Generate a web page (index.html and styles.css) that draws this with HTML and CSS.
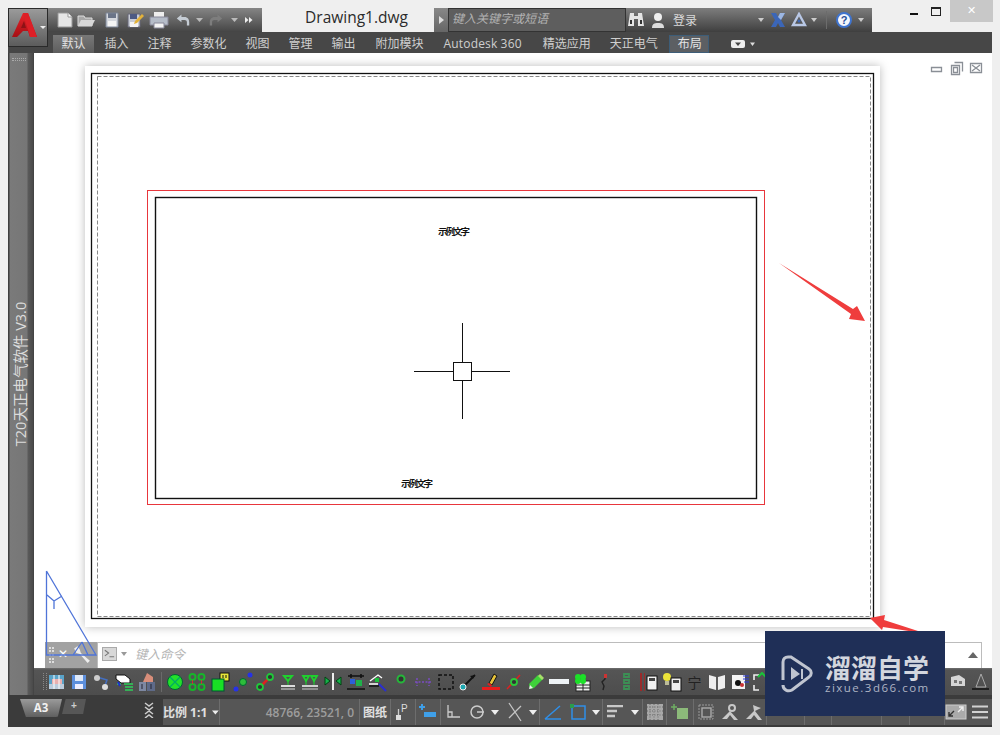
FILE: index.html
```
<!DOCTYPE html>
<html lang="zh">
<head>
<meta charset="utf-8">
<title>Drawing1.dwg</title>
<link rel="stylesheet" href="styles.css">
</head>
<body>
<div class="window">
  <div class="app-btn">
    <svg width="40" height="39" viewBox="0 0 40 39"><defs><linearGradient id="ra" x1="0" y1="0" x2="0" y2="1"><stop offset="0" stop-color="#e8252b"/><stop offset="1" stop-color="#a50f14"/></linearGradient></defs><path d="M15 5h5l9 24h-7l-2-6h-5l-6 6H4Z" fill="url(#ra)"/><path d="M16 13l-3 7h5z" fill="#8e1216"/><path d="M15 5h5l9 24h-7L17 12Z" fill="#dd1f26"/><path d="M32 18h6l-3 3z" fill="#eee"/></svg>
  </div>
  <div class="win-controls">
    <span class="win-min"></span><span class="win-max"></span><span class="win-close">✕</span>
  </div>

  <header class="title-row">
    <div class="qat">
      <svg class="qi" width="20" height="18" viewBox="0 0 20 18"><path d="M3 2h10l4 4v10H3z" fill="#e6e6e6" stroke="#999"/><path d="M13 2v4h4" fill="#fff" stroke="#999"/></svg>
      <svg class="qi q-open" width="20" height="18" viewBox="0 0 20 18"><path d="M2 5h6l1 2h7v8H2z" fill="#a8a8a8" stroke="#ddd"/><path d="M2 15l3-6h14l-3 6z" fill="#d8d8d8"/></svg>
      <svg class="qi q-save" width="20" height="18" viewBox="0 0 20 18"><path d="M4 2h12v14H4z" fill="#d5d8de"/><path d="M6 2h8v5H6z" fill="#6a7488"/><path d="M6 10h8v6H6z" fill="#f4f4f4"/><path d="M4 2h12v14H4z" fill="none" stroke="#7c8698"/></svg>
      <svg class="qi" width="20" height="18" viewBox="0 0 20 18"><path d="M3 3h12v13H3z" fill="#c8ccd6" stroke="#667"/><path d="M5 3h7v5H5z" fill="#4d5a84"/><path d="M5 11h8v5H5z" fill="#f4f4f4"/><path d="M10 10l7-7 2 2-7 7-3 1z" fill="#e3b23a"/></svg>
      <svg class="qi" width="22" height="18" viewBox="0 0 22 18"><path d="M6 1h10v5H6z" fill="#eee"/><path d="M2 6h18v8H2z" fill="#b5bcc8" stroke="#889"/><path d="M6 12h10v5H6z" fill="#f4f4f4" stroke="#889"/></svg>
      <svg class="qi q-undo" width="18" height="14" viewBox="0 0 18 18"><path d="M1 7l6-5v3h4c4 0 6 3 6 7v4h-3v-4c0-2-1-3-3-3H7v3z" fill="#c5ccd4"/></svg>
      <svg class="qa" width="7" height="4" viewBox="0 0 7 4"><path d="M0 0h7L3.500 4z" fill="#bbb"/></svg>
      <svg class="qi" width="18" height="14" viewBox="0 0 18 18"><path d="M17 7l-6-5v3H7c-4 0-6 3-6 7v4h3v-4c0-2 1-3 3-3h4v3z" fill="#7d7d7d"/></svg>
      <svg class="qa q-a2" width="7" height="4" viewBox="0 0 7 4"><path d="M0 0h7L3.500 4z" fill="#bbb"/></svg>
      <svg class="qi q-more" width="8" height="8" viewBox="0 0 8 8"><path d="M0 1l3.500 3L0 7zM4 1l3.500 3L4 7z" fill="#eee"/></svg>
    </div>
    <div class="doc-title">Drawing1.dwg</div>
    <div class="help-bar">
      <span class="search-arrow"><svg width="5" height="8" viewBox="0 0 5 8"><path d="M0 0l5 4-5 4z" fill="#ddd"/></svg></span>
      <span class="search-box">键入关键字或短语</span>
      <svg class="binoc" width="18" height="16" viewBox="0 0 18 16"><path d="M3 1h4v3h4V1h4l2 13h-6V7H7v7H1z" fill="#e4e4e4"/><path d="M3 8h2v4H3zM13 8h2v4h-2z" fill="#333"/></svg>
      <svg class="user" width="14" height="17" viewBox="0 0 14 17"><circle cx="7" cy="5" r="4" fill="#eee"/><path d="M1 16c0-4 2-5 6-5s6 1 6 5z" fill="#ddd"/></svg>
      <span class="login">登录</span>
      <svg class="hb-arrow" width="6" height="4" viewBox="0 0 6 4"><path d="M0 0h6L3 4z" fill="#ccc"/></svg>
      <svg class="x-logo" width="16" height="16" viewBox="0 0 16 16"><path d="M1 1h5l2 4 2-4h5l-4 7 4 7h-5l-2-4-2 4H1l4-7z" fill="#3b66b8"/><path d="M8 5l2-4h5l-4 7z" fill="#9db7e2"/></svg>
      <svg class="a-logo" width="16" height="16" viewBox="0 0 16 16"><path d="M8 2l6 11H2z" fill="none" stroke="#b9c8e6" stroke-width="2.400"/><circle cx="8" cy="9" r="1.500" fill="#3c66b4"/></svg>
      <svg class="hb-arrow2" width="6" height="4" viewBox="0 0 6 4"><path d="M0 0h6L3 4z" fill="#ccc"/></svg>
      <span class="hb-sep"></span>
      <span class="help-q">?</span>
      <svg class="hb-arrow3" width="6" height="4" viewBox="0 0 6 4"><path d="M0 0h6L3 4z" fill="#ccc"/></svg>
    </div>
  </header>

  <nav class="tabs">
    <span class="tab tab-on">默认</span>
    <span class="tab">插入</span>
    <span class="tab">注释</span>
    <span class="tab">参数化</span>
    <span class="tab">视图</span>
    <span class="tab">管理</span>
    <span class="tab">输出</span>
    <span class="tab tab-addon">附加模块</span>
    <span class="tab tab-latin">Autodesk 360</span>
    <span class="tab">精选应用</span>
    <span class="tab">天正电气</span>
    <span class="tab tab-ctx">布局</span>
    <span class="tab tab-icon"><svg width="26" height="10" viewBox="0 0 26 10"><rect x="1" y="1" width="14" height="8" rx="2" fill="#eee"/><path d="M5 3.500h6L8 7z" fill="#444"/><path d="M20 3.500h5L22.500 7z" fill="#ddd"/></svg></span>
  </nav>

  <div class="work">
    <aside class="rail">
      <span class="rail-grip"></span>
      <span class="rail-label">T20天正电气软件 V3.0</span>
    </aside>
    <div class="work-col">
      <div class="stage">
        <div class="canvas"></div>
        <div class="cmd-row">
          <div class="cmd-grip">
            <span class="cmd-dots"></span>
            <span class="cmd-x">✕</span>
            <svg width="18" height="18" viewBox="0 0 16 16"><path d="M1 3l3-2 2 3 1 3 8 7-2 2-7-8-3-1z" fill="#eee"/></svg>
          </div>
          <div class="cmd-input">
            <span class="cmd-prompt"><svg width="14" height="12" viewBox="0 0 14 12"><path d="M2 2l4 3-4 3M7 9h5" fill="none" stroke="#777" stroke-width="1.200"/></svg></span>
            <svg class="cmd-caret" width="6" height="4" viewBox="0 0 6 4"><path d="M0 0h6L3 4z" fill="#999"/></svg>
            <span class="cmd-text">键入命令</span>
            <svg class="cmd-up" width="10" height="6" viewBox="0 0 10 6"><path d="M0 6h10L5 0z" fill="#666"/></svg>
          </div>
        </div>
        <svg class="drawing" width="958" height="615" viewBox="34 53 958 615">
          <rect class="paper" x="85" y="66" width="795" height="561"/>
          <rect class="frame" x="91.500" y="73.500" width="782" height="545"/>
          <rect class="dash" x="97.500" y="76.500" width="773" height="540"/>
          <rect class="red-box" x="147.500" y="190.500" width="617" height="314"/>
          <rect class="black-box" x="155.500" y="197.500" width="601" height="301"/>
          <text class="sample" x="453" y="235">示例文字</text>
          <text class="sample" x="416" y="487">示例文字</text>
          <path class="thin" d="M414 371.500h39M471 371.500h39M462.500 323v39M462.500 380v39"/>
          <rect class="thin-box" x="453.500" y="362.500" width="18" height="18"/>
          <path class="ucs" d="M46.500 571V655H96L46.500 571M47 595l7 6 8-5M54 601v8M73 655l9-13M82 642l6 13"/>
          <path class="red-arrow" d="M779 263L853 309l4-3 8 15-16-2 2-5z"/>
          <path class="red-arrow" d="M870 618l15-3-1 5 34 11-3 1-32-5-1 3z"/>
          <g class="mdi">
            <path d="M931.500 67.500h10v4h-10z"/>
            <path d="M951.500 65.500h8v9h-8z"/><path d="M954.500 62.500h8v9"/><path d="M953.500 67.500h4v5h-4z"/>
            <path d="M970.500 63.500h11v9h-11z"/><path d="M972 65l8 6M980 65l-8 6"/>
          </g>
        </svg>
      </div>
      <div class="toolbar">
        <span class="tb-grip"></span>
        <span class="slot"><svg width="20" height="20" viewBox="0 0 20 20"><rect x="2" y="3" width="15" height="14" fill="#5aa3c9"/><path d="M5 7h10v5H5z" fill="#e8b0b0"/><path d="M2 12h15v5H2z" fill="#bcd"/><path d="M7 3v14M12 3v14" stroke="#fff"/></svg></span>
        <span class="slot"><svg width="20" height="20" viewBox="0 0 20 20"><rect x="3" y="3" width="14" height="14" fill="#5d8fdc"/><rect x="6" y="3" width="8" height="6" fill="#dfe9f8"/><rect x="6" y="12" width="8" height="5" fill="#eef"/></svg></span>
        <span class="slot"><svg width="20" height="20" viewBox="0 0 20 20"><path d="M5 5l10 3-3 8" fill="none" stroke="#446fc0" stroke-width="1.500"/><circle cx="5" cy="6" r="3" fill="#ccc"/><circle cx="13" cy="15" r="3" fill="#ddd"/></svg></span>
        <span class="slot"><svg width="20" height="20" viewBox="0 0 20 20"><path d="M1 3h9l5 4v4H6L1 7z" fill="#fff" stroke="#111"/><path d="M2 12h4M9 12h9M10 15h8M10 18h8" stroke="#2ecf5a" stroke-width="1.600"/><path d="M3 10l2 4" stroke="#1c2fd0" stroke-width="2"/></svg></span>
        <span class="slot"><svg width="20" height="20" viewBox="0 0 20 20"><path d="M10 1l6 4v5H6z" fill="#d88e7a"/><rect x="2" y="10" width="7" height="9" fill="#7d88a2"/><rect x="10" y="10" width="8" height="9" fill="#5e6a88"/><path d="M5 12v5M14 12v5" stroke="#223"/></svg></span>
        <span class="tb-sep"></span>
        <span class="slot"><svg width="20" height="20" viewBox="0 0 20 20"><circle cx="10" cy="10" r="7.500" fill="#23e02a" stroke="#063" stroke-width="1"/><path d="M5 5l10 10M15 5L5 15" stroke="#0a6" stroke-width="1.200"/></svg></span>
        <span class="slot"><svg width="20" height="20" viewBox="0 0 20 20"><g fill="none" stroke="#17b52a" stroke-width="2"><circle cx="5.500" cy="5" r="3"/><circle cx="14.500" cy="5" r="3"/><circle cx="5.500" cy="15" r="3"/><circle cx="14.500" cy="15" r="3"/></g><path d="M5.500 8v4M14.500 8v4" stroke="#c33"/></svg></span>
        <span class="slot"><svg width="20" height="20" viewBox="0 0 20 20"><rect x="10" y="1" width="9" height="8" fill="#e6e63a" stroke="#111"/><path d="M13 3v3M16 3v3" stroke="#111"/><rect x="2" y="7" width="12" height="12" fill="#19e025" stroke="#053"/></svg></span>
        <span class="slot"><svg width="20" height="20" viewBox="0 0 20 20"><circle cx="17" cy="3" r="2.500" fill="#2632e8"/><circle cx="3" cy="17" r="2.500" fill="#2632e8"/><circle cx="10" cy="10" r="3.500" fill="#2dbd3a" stroke="#063"/></svg></span>
        <span class="slot"><svg width="20" height="20" viewBox="0 0 20 20"><path d="M6 14L14 6" stroke="#e02020" stroke-width="2.500"/><circle cx="15" cy="5" r="3" fill="#333" stroke="#1fc83a" stroke-width="1.800"/><circle cx="5" cy="15" r="3" fill="#333" stroke="#1fc83a" stroke-width="1.800"/></svg></span>
        <span class="slot"><svg width="20" height="20" viewBox="0 0 20 20"><path d="M6 4h8l-4 5z" fill="none" stroke="#1fd12e" stroke-width="2"/><path d="M10 9v4" stroke="#1fd12e"/><path d="M3 14h14" stroke="#fff" stroke-width="1.600"/><path d="M3 17h14" stroke="#ddd"/></svg></span>
        <span class="slot"><svg width="20" height="20" viewBox="0 0 20 20"><path d="M3 4h6l-3 5zM11 4h6l-3 5z" fill="none" stroke="#1fd12e" stroke-width="1.800"/><path d="M6 9v4M14 9v4" stroke="#1fd12e"/><path d="M2 14h16" stroke="#eee" stroke-width="1.600"/><path d="M2 17h16" stroke="#ccc"/></svg></span>
        <span class="slot"><svg width="20" height="20" viewBox="0 0 20 20"><path d="M2 5l5 4-5 4zM18 5l-5 4 5 4z" fill="#16b04a" stroke="#041"/><path d="M10 1v17" stroke="#eee" stroke-width="2"/></svg></span>
        <span class="slot"><svg width="20" height="20" viewBox="0 0 20 20"><path d="M2 4h16M5 2v4M15 2v4M1 17h18" stroke="#111" stroke-width="1.600"/><rect x="4" y="7" width="5" height="5" fill="#2c5fd8"/><rect x="10" y="8" width="6" height="6" fill="#1fb04a"/></svg></span>
        <span class="slot"><svg width="20" height="20" viewBox="0 0 20 20"><path d="M2 9l8-6 4 3M1 12h9" stroke="#fff" stroke-width="1.400" fill="none"/><path d="M7 6h4v4H7z" fill="#19c03a"/><path d="M1 14h10" stroke="#111" stroke-width="1.500"/><path d="M11 12l7 7" stroke="#2a2ecf" stroke-width="2"/></svg></span>
        <span class="slot"><svg width="20" height="20" viewBox="0 0 20 20"><circle cx="10" cy="7" r="3.500" fill="#333" stroke="#25b83a" stroke-width="2"/></svg></span>
        <span class="slot"><svg width="20" height="20" viewBox="0 0 20 20"><path d="M4 6v8M16 6v8M2 10h16" stroke="#7a4cc0" stroke-width="1.500" stroke-dasharray="2 1.500" fill="none"/></svg></span>
        <span class="slot"><svg width="20" height="20" viewBox="0 0 20 20"><rect x="3" y="3" width="14" height="14" fill="none" stroke="#111" stroke-width="1.500" stroke-dasharray="3 2"/></svg></span>
        <span class="slot"><svg width="20" height="20" viewBox="0 0 20 20"><path d="M6 14L17 3" stroke="#111" stroke-width="1.800"/><path d="M17 3l-5 1 3 3z" fill="#111"/><circle cx="5" cy="15" r="3" fill="#1ca7b0" stroke="#eee"/></svg></span>
        <span class="slot"><svg width="20" height="20" viewBox="0 0 20 20"><path d="M8 11L13 2l3 2-5 9z" fill="#e6c23a" stroke="#111"/><path d="M1 15h18v3H1z" fill="#e81d1d"/><path d="M6 12l2-1 3 2-1 2z" fill="#e81d1d"/></svg></span>
        <span class="slot"><svg width="20" height="20" viewBox="0 0 20 20"><path d="M3 17L16 3" stroke="#e02020" stroke-width="1.500"/><circle cx="10" cy="10" r="3" fill="#333" stroke="#2cc83a" stroke-width="1.800"/></svg></span>
        <span class="slot"><svg width="20" height="20" viewBox="0 0 20 20"><path d="M3 12L12 3l5 4-9 9-4 1z" fill="#3fd13a"/><path d="M14 2l4 4-2 2-4-4z" fill="#a6e06a"/><path d="M3 17l4-1-3-3z" fill="#eee"/></svg></span>
        <span class="slot"><svg width="20" height="20" viewBox="0 0 20 20"><rect x="0" y="7" width="20" height="5" fill="#eef3f6"/></svg></span>
        <span class="slot"><svg width="20" height="20" viewBox="0 0 20 20"><rect x="5" y="9" width="14" height="10" fill="#eee" stroke="#222"/><path d="M5 13h14M5 16h14M12 9v10" stroke="#222"/><circle cx="7" cy="5" r="3" fill="#1ce028"/><circle cx="12" cy="5" r="3" fill="#1ce028"/><circle cx="7" cy="9" r="3" fill="#1ce028"/><circle cx="12" cy="9" r="3" fill="#1ce028"/></svg></span>
        <span class="slot"><svg width="20" height="20" viewBox="0 0 20 20"><path d="M11 2v5l-3 3 2 4-1 4" fill="none" stroke="#222" stroke-width="1.400"/><path d="M10 2h3v4h-3z" fill="#c33"/></svg></span>
        <span class="slot"><svg width="20" height="20" viewBox="0 0 20 20"><g fill="none" stroke="#3c8f55" stroke-width="1.800"><path d="M7 2h5v3H7zM7 8h5v3H7zM7 14h5v3H7z"/></g></svg></span>
        <span class="slot"><svg width="20" height="20" viewBox="0 0 20 20"><path d="M1 1h2v18H1zM5 1h1v18H5z" fill="#9a2a2a"/><rect x="8" y="4" width="10" height="14" fill="#f0f0f0" stroke="#111"/><rect x="10" y="6" width="6" height="3" fill="#444"/></svg></span>
        <span class="slot"><svg width="20" height="20" viewBox="0 0 20 20"><circle cx="5" cy="5" r="4" fill="#eae23a"/><rect x="3" y="9" width="4" height="4" fill="#bb9"/><rect x="9" y="6" width="10" height="13" fill="#eee" stroke="#111"/><rect x="11" y="8" width="6" height="3" fill="#444"/></svg></span>
        <span class="slot tool-char">宁</span>
        <span class="slot"><svg width="20" height="20" viewBox="0 0 20 20"><path d="M2 3l7 2v13l-7-2zM18 3l-7 2v13l7-2z" fill="#eee"/><path d="M10 5v13" stroke="#666"/></svg></span>
        <span class="slot"><svg width="20" height="20" viewBox="0 0 20 20"><path d="M2 3h13v14H2z" fill="#f3f3f3"/><circle cx="8" cy="11" r="3" fill="#111"/><circle cx="12" cy="13" r="2" fill="#c33"/><path d="M13 4h6M13 7h6M14 10h5" stroke="#2a3ae0"/></svg></span>
        <span class="slot"><svg width="20" height="20" viewBox="0 0 20 20"><path d="M2 8V3h5M13 3h5v5M18 13v5h-5M7 18H2v-5" fill="none" stroke="#eee" stroke-width="1.600"/><path d="M6 5l4-4 4 4" fill="none" stroke="#19c43a" stroke-width="2"/></svg></span>
        <span class="tb-right">
          <span class="slot"><svg width="20" height="20" viewBox="0 0 20 20"><circle cx="6" cy="10" r="5" fill="none" stroke="#ddd" stroke-width="1.500"/></svg></span>
          <span class="slot"><svg width="20" height="20" viewBox="0 0 20 20"><path d="M3 5l8-2 6 4v7H3z" fill="#d6d6d6"/><path d="M6 8h3v3H6zM11 9h3v3h-3z" fill="#777"/></svg></span>
          <span class="slot"><svg width="20" height="20" viewBox="0 0 20 20"><path d="M10 2l5 13H5z" fill="none" stroke="#aaa"/><path d="M1 17h17" stroke="#111" stroke-width="1.500"/></svg></span>
        </span>
      </div>
    </div>
  </div>

  <footer class="status">
    <div class="layouts">
      <span class="lay-a3">A3</span>
      <span class="lay-plus">+</span>
      <span class="lay-chev"><svg width="10" height="16" viewBox="0 0 10 16"><path d="M1 1l4 3 4-3M1 5l4 3 4-3M1 12l4-3 4 3M1 16l4-3 4 3" fill="none" stroke="#ccc" stroke-width="1.500"/></svg></span>
    </div>
    <div class="sb-wrap">
      <span class="sb sb-scale">比例 1:1<svg width="8" height="5" viewBox="0 0 8 5"><path d="M0 0h8L4 5z" fill="#eee"/></svg></span>
      <span class="sb sb-coord">48766, 23521, 0</span>
      <span class="sb sb-paper">图纸</span>
      <span class="sb i25"><svg width="16" height="18" viewBox="0 0 16 18"><rect x="1" y="12" width="5" height="5" fill="#ddd"/><path d="M3.500 12V6" stroke="#ccc" stroke-width="1.300"/><text class="p-mark" x="6" y="9">P</text></svg></span>
      <span class="sb i25"><svg width="20" height="18" viewBox="0 0 20 18"><path d="M4 1v6M1 4h6" stroke="#3f9fe8" stroke-width="2"/><rect x="6" y="9" width="12" height="5" fill="#3f9fe8"/></svg></span>
      <span class="sb sb-group">
        <span class="ic24"><svg width="16" height="16" viewBox="0 0 16 16"><path d="M3 1v12h12M3 8h4v5" fill="none" stroke="#ccc" stroke-width="1.300"/></svg></span>
        <span class="ic24"><svg width="16" height="16" viewBox="0 0 16 16"><circle cx="8" cy="8" r="6" fill="none" stroke="#ccc" stroke-width="1.500"/><path d="M8 8h7" stroke="#ccc" stroke-width="1.500"/></svg></span>
        <span class="ar12"><svg width="8" height="5" viewBox="0 0 8 5"><path d="M0 0h8L4 5z" fill="#eee"/></svg></span>
        <span class="ic24 ml2"><svg width="18" height="20" viewBox="0 0 18 20"><path d="M3 1l12 18M15 4L3 16" fill="none" stroke="#c4c4c4" stroke-width="1.300"/></svg></span>
        <span class="ar12"><svg width="8" height="5" viewBox="0 0 8 5"><path d="M0 0h8L4 5z" fill="#eee"/></svg></span>
      </span>
      <span class="sb sb-group">
        <span class="ic25"><svg width="18" height="16" viewBox="0 0 18 16"><path d="M1 15h16M1 15L16 2" fill="none" stroke="#2f8fe8" stroke-width="1.500"/></svg></span>
        <span class="ic25"><svg width="18" height="18" viewBox="0 0 18 18"><rect x="3" y="3" width="13" height="13" fill="none" stroke="#2f8fe8" stroke-width="1.500"/><rect x="1" y="1" width="4" height="4" fill="#2a9c4c"/></svg></span>
        <span class="ar12"><svg width="8" height="5" viewBox="0 0 8 5"><path d="M0 0h8L4 5z" fill="#eee"/></svg></span>
      </span>
      <span class="sb sb-group">
        <span class="ic24"><svg width="18" height="14" viewBox="0 0 18 14"><path d="M1 1h16M1 6h10M1 11h8" stroke="#c8c8c8" stroke-width="2.400"/></svg></span>
        <span class="ar15"><svg width="8" height="5" viewBox="0 0 8 5"><path d="M0 0h8L4 5z" fill="#eee"/></svg></span>
      </span>
      <span class="sb i24"><svg width="16" height="16" viewBox="0 0 16 16"><rect width="16" height="16" fill="#a8a8a8"/><path d="M0 3h16M0 7h16M0 11h16M3 0v16M7 0v16M11 0v16" stroke="#6a6a6a" stroke-dasharray="1 1.500"/></svg></span>
      <span class="sb i27"><svg width="18" height="18" viewBox="0 0 18 18"><path d="M3 1v6M0 4h6" stroke="#6fae63" stroke-width="1.500"/><rect x="6" y="5" width="11" height="11" fill="#8cba7a"/></svg></span>
      <span class="sb sb-group">
        <span class="ic24"><svg width="16" height="16" viewBox="0 0 16 16"><rect x="1" y="1" width="14" height="14" fill="none" stroke="#9a9a9a" stroke-dasharray="2 1"/><rect x="4" y="4" width="9" height="9" fill="none" stroke="#aaa" stroke-width="1.400"/></svg></span>
        <span class="ic24"><svg width="18" height="18" viewBox="0 0 18 18"><circle cx="11" cy="5" r="3" fill="none" stroke="#c8c8c8" stroke-width="2"/><path d="M9 8L1 16h5l3-4 4 5h4z" fill="#c8c8c8"/></svg></span>
        <span class="ic24"><svg width="18" height="18" viewBox="0 0 18 18"><path d="M8 2l1 6L1 16h5l3-4 4 5h4L10 8l6-3-3-1z" fill="#c8c8c8"/></svg></span>
      </span>
      <span class="sb sb-under w38"></span>
      <span class="sb sb-under w27"></span>
      <span class="sb sb-under w50"></span>
      <span class="sb sb-under w28"></span>
      <span class="sb sb-under w35"></span>
      <span class="sb i23"><svg width="22" height="16" viewBox="0 0 22 16"><rect x="1" y="1" width="20" height="14" fill="#aaa" stroke="#ccc"/><path d="M4 12l5-5M4 8v4h4" fill="none" stroke="#333" stroke-width="1.400"/><path d="M18 3l-5 5M18 7V3h-4" fill="none" stroke="#eee" stroke-width="1.400"/></svg></span>
      <span class="sb i24 sb-last"><svg width="16" height="14" viewBox="0 0 16 14"><path d="M0 1.500h16M0 7h16M0 12.500h16" stroke="#d2d2d2" stroke-width="2"/></svg></span>
    </div>
  </footer>

  <aside class="watermark">
    <svg width="36" height="38" viewBox="0 0 36 38"><path d="M10 2h3l18 12c3 2 3 6 0 8L14 35c-4 2-9 0-9-5" fill="none" stroke="#c0c5d0" stroke-width="3"/><path d="M5 25V7c0-3 2-5 5-5" fill="none" stroke="#c0c5d0" stroke-width="3"/><path d="M13 12v13l9-6z" fill="#c0c5d0"/><path d="M24 14v10" stroke="#c0c5d0" stroke-width="2"/></svg>
    <div class="wm-text">
      <div class="wm-cn">溜溜自学</div>
      <div class="wm-en">zixue.3d66.com</div>
    </div>
  </aside>
</div>
</body>
</html>
```

FILE: styles.css
```
* { box-sizing: border-box; }
html, body { margin: 0; height: 100%; }
body { font-family: "Open Sans", "Noto Sans CJK SC", sans-serif; background: #f0f0f0; overflow: hidden; }
.window { position: relative; width: 1000px; height: 735px; padding: 8px; display: flex; flex-direction: column; background: #efefef; }

.app-btn { position: absolute; left: 8px; top: 8px; width: 40px; height: 39px; background: linear-gradient(#9a9a9a, #5c5c5c); border: 1px solid #2a2a2a; z-index: 3; }
.app-btn svg { display: block; margin: -1px; }

.win-controls { position: absolute; right: 7px; top: 0; height: 22px; width: 86px; }
.win-min { position: absolute; left: 3px; top: 13px; width: 8px; height: 2px; background: #111; }
.win-max { position: absolute; left: 24px; top: 7px; width: 10px; height: 9px; border: 1px solid #222; border-top-width: 2px; }
.win-close { position: absolute; left: 43px; top: 0; width: 43px; height: 22px; background: #c8c8c8; color: #fff; font: 11px/22px "DejaVu Sans", sans-serif; text-align: center; }

.title-row { height: 24px; display: flex; padding-left: 40px; }
.qat { width: 214px; display: flex; align-items: center; padding-left: 7px; gap: 3px; background: linear-gradient(#858585, #454545); }
.q-open { margin-left: -2px; }
.q-save { margin-left: 3px; }
.q-undo { margin-left: 1px; }
.qa { margin: 0 1px; }
.q-a2 { margin-left: 3px; }
.q-more { margin-left: 3px; }
.doc-title { width: 172px; padding-left: 17px; text-align: center; font-size: 15.500px; line-height: 19px; color: #2b2b2b; }
.help-bar { width: 438px; position: relative; display: flex; align-items: center; background: linear-gradient(#7d7d7d, #3f3f3f); }
.search-arrow { width: 14px; height: 24px; display: flex; align-items: center; justify-content: center; background: linear-gradient(#888, #666); }
.search-box { width: 178px; height: 24px; background: #5e5e5e; border: 1px solid #333; color: #b2b2b2; font-size: 12px; font-style: italic; line-height: 20px; padding-left: 3px; white-space: nowrap; }
.binoc { margin-left: 1px; }
.user { margin-left: 6px; }
.login { margin-left: 8px; color: #d9d9d9; font-size: 12px; }
.hb-arrow { margin-left: 61px; }
.x-logo { margin-left: 6px; }
.a-logo { margin-left: 5px; }
.hb-arrow2 { margin-left: 4px; }
.hb-sep { width: 1px; height: 18px; background: #6c6c6c; margin-left: 9px; }
.help-q { margin-left: 9px; width: 16px; height: 16px; border-radius: 50%; background: #f4f6fb; border: 2px solid #3f74cf; color: #274f9a; font: bold 11px/12px "Liberation Sans", sans-serif; text-align: center; }
.hb-arrow3 { margin-left: 6px; }

.tabs { height: 21px; background: #474747; display: flex; padding-left: 45px; align-items: flex-end; }
.tab { height: 18px; padding: 0 9.500px; color: #cfcfcf; font-size: 12px; line-height: 17px; white-space: nowrap; }
.tab-on { background: linear-gradient(#787878, #5e5e5e); color: #e2e2e2; width: 41px; margin-right: 1px; padding: 0 8.500px; }
.tab-addon { margin-left: 1px; }
.tab-latin { letter-spacing: 0.150px; margin-left: 1px; margin-right: 2px; }
.tab-ctx { background: #5c5f63; border: 1px solid #3d5d78; padding: 0 7.500px; margin: 0 8px 0 2px; color: #e4e4e4; line-height: 16px; width: 40px; }
.tab-icon { padding: 0 0 0 13px; display: flex; align-items: center; }

.work { flex: 1; display: grid; grid-template-columns: 26px 1fr; min-height: 0; }
.rail { position: relative; background: linear-gradient(90deg, #3e3e3e 0, #3e3e3e 1px, #7a7a7a 2px, #767676 19px, #5a5a5a 20px, #4a4a4a 25px, #3e3e3e 26px); display: flex; align-items: center; justify-content: center; overflow: visible; }
.rail-grip { position: absolute; top: 5px; left: 4px; width: 14px; height: 3px; border-top: 1px dotted #aaa; border-bottom: 1px dotted #aaa; }
.rail-label { flex: none; transform: rotate(-90deg); color: #dcdcdc; font-size: 14.500px; line-height: 20px; white-space: nowrap; }

.work-col { display: flex; flex-direction: column; min-width: 0; }
.stage { position: relative; flex: 1; display: flex; flex-direction: column; background: #fff; }
.canvas { flex: 1; }
.drawing { position: absolute; left: 0; top: 0; z-index: 2; pointer-events: none; }
.paper { fill: #fff; filter: drop-shadow(0 0 5px #bbb); }
.frame { fill: none; stroke: #111; stroke-width: 1.300; }
.dash { fill: none; stroke: #888; stroke-dasharray: 4 2; }
.red-box { fill: none; stroke: #e8363c; }
.black-box { fill: none; stroke: #111; stroke-width: 1.400; }
.sample { font: bold 9.500px "Noto Sans CJK SC", sans-serif; fill: #111; text-anchor: middle; letter-spacing: -2px; }
.thin { stroke: #111; fill: none; }
.thin-box { stroke: #111; fill: none; }
.ucs { stroke: #4f74d8; fill: none; stroke-width: 1.300; }
.red-arrow { fill: #ef3d3d; }
.mdi path { fill: none; stroke: #8a8f96; stroke-width: 1.300; }

.cmd-row { height: 26px; display: flex; padding-left: 11px; }
.cmd-grip { width: 52px; background: #a2a2a2; display: flex; align-items: center; gap: 5px; position: relative; padding-left: 13px; padding-bottom: 2px; }
.cmd-dots { position: absolute; left: 4px; top: 5px; width: 5px; height: 16px; border-left: 2px dotted #ddd; border-right: 2px dotted #ddd; }
.cmd-x { color: #fff; font: bold 12px "DejaVu Sans", sans-serif; }
.cmd-input { width: 885px; border: 1px solid #bcbcbc; border-bottom: 0; display: flex; align-items: center; padding-left: 4px; padding-bottom: 4px; position: relative; background: #fff; }
.cmd-prompt { width: 15px; height: 14px; background: #d8d8d8; border: 1px solid #aaa; display: flex; align-items: center; justify-content: center; }
.cmd-caret { margin-left: 4px; }
.cmd-text { margin-left: 8px; color: #b4b4b4; font-size: 12.500px; font-style: italic; }
.cmd-up { position: absolute; right: 3px; top: 9px; }

.toolbar { height: 27px; background: linear-gradient(#6f6f6f, #555 2px, #4d4d4d); display: flex; align-items: center; padding-left: 8.500px; }
.tb-grip { width: 4px; height: 17px; margin-right: 0; border-left: 1px dotted #888; border-right: 1px dotted #888; }
.slot { width: 22.600px; flex: none; height: 22px; display: flex; align-items: center; justify-content: center; }
.toolbar > .slot:nth-child(2) { margin-left: -1px; }
.tool-char { font: 14px/20px "Noto Sans CJK SC", sans-serif; color: #222; }
.tb-sep { width: 1px; height: 20px; background: #6a6a6a; margin: 0 1px 0 3px; }
.tb-right { margin-left: auto; display: flex; }

.status { height: 32px; background: #3b3b3b; display: flex; }
.layouts { width: 155px; position: relative; flex: none; }
.lay-a3 { position: absolute; left: 12px; top: 4px; width: 42px; height: 18px; background: linear-gradient(#9a9a9a, #5f5f5f); color: #f2f2f2; font: bold 11.500px/17px "Open Sans", sans-serif; text-align: center; clip-path: polygon(0 0, 100% 0, 90% 100%, 14% 100%); border-radius: 0 0 6px 6px; }
.lay-plus { position: absolute; left: 54px; top: 4px; width: 24px; height: 15px; background: #575757; color: #ccc; font: bold 10px/14px "Liberation Sans", sans-serif; text-align: center; clip-path: polygon(15% 0, 100% 0, 88% 100%, 0 100%); }
.lay-chev { position: absolute; left: 136px; top: 6px; }
.sb-wrap { display: flex; height: 26px; margin-top: 4px; flex: 1; background: #565656; align-items: stretch; }
.sb { display: flex; align-items: center; justify-content: center; border-left: 1px solid #6d6d6d; flex: none; color: #e0e0e0; font-size: 12px; white-space: nowrap; }
.sb-scale { width: 56px; font-weight: 700; gap: 5px; border-left: 0; font-size: 12px; }
.sb-coord { width: 140px; justify-content: flex-end; padding-right: 5px; color: #9d9d9d; font-weight: 600; font-size: 12px; }
.sb-paper { width: 31px; font-weight: 700; font-size: 12px; }
.p-mark { font: 10px "Liberation Sans", sans-serif; fill: #ddd; }
.i25 { width: 25px; }
.i24 { width: 24px; }
.i23 { width: 23px; }
.i27 { width: 27px; }
.sb-group { justify-content: flex-start; }
.ic24 { width: 24px; display: flex; justify-content: center; }
.ic25 { width: 25px; display: flex; justify-content: center; }
.ar12 { width: 12px; display: flex; justify-content: center; }
.ar15 { width: 15px; display: flex; justify-content: center; }
.ml2 { margin-left: 2px; }
.w27 { width: 27px; }
.w28 { width: 28px; }
.w35 { width: 35px; }
.w38 { width: 38px; }
.w50 { width: 50px; }
.sb-last { flex: 1; border-left: 0; }

.watermark { position: absolute; left: 765px; top: 631px; width: 180px; height: 85px; background: #1f2f57; display: flex; align-items: center; padding: 0 0 0 13px; gap: 11px; z-index: 5; }
.wm-text { display: flex; flex-direction: column; }
.wm-cn { color: #d3d6de; font: bold 26px/28px "Noto Sans CJK SC", sans-serif; height: 28px; white-space: nowrap; overflow: visible; }
.wm-en { color: #aeb4c4; font: 11.500px/13px "Open Sans", sans-serif; letter-spacing: 1.500px; white-space: nowrap; }
```
